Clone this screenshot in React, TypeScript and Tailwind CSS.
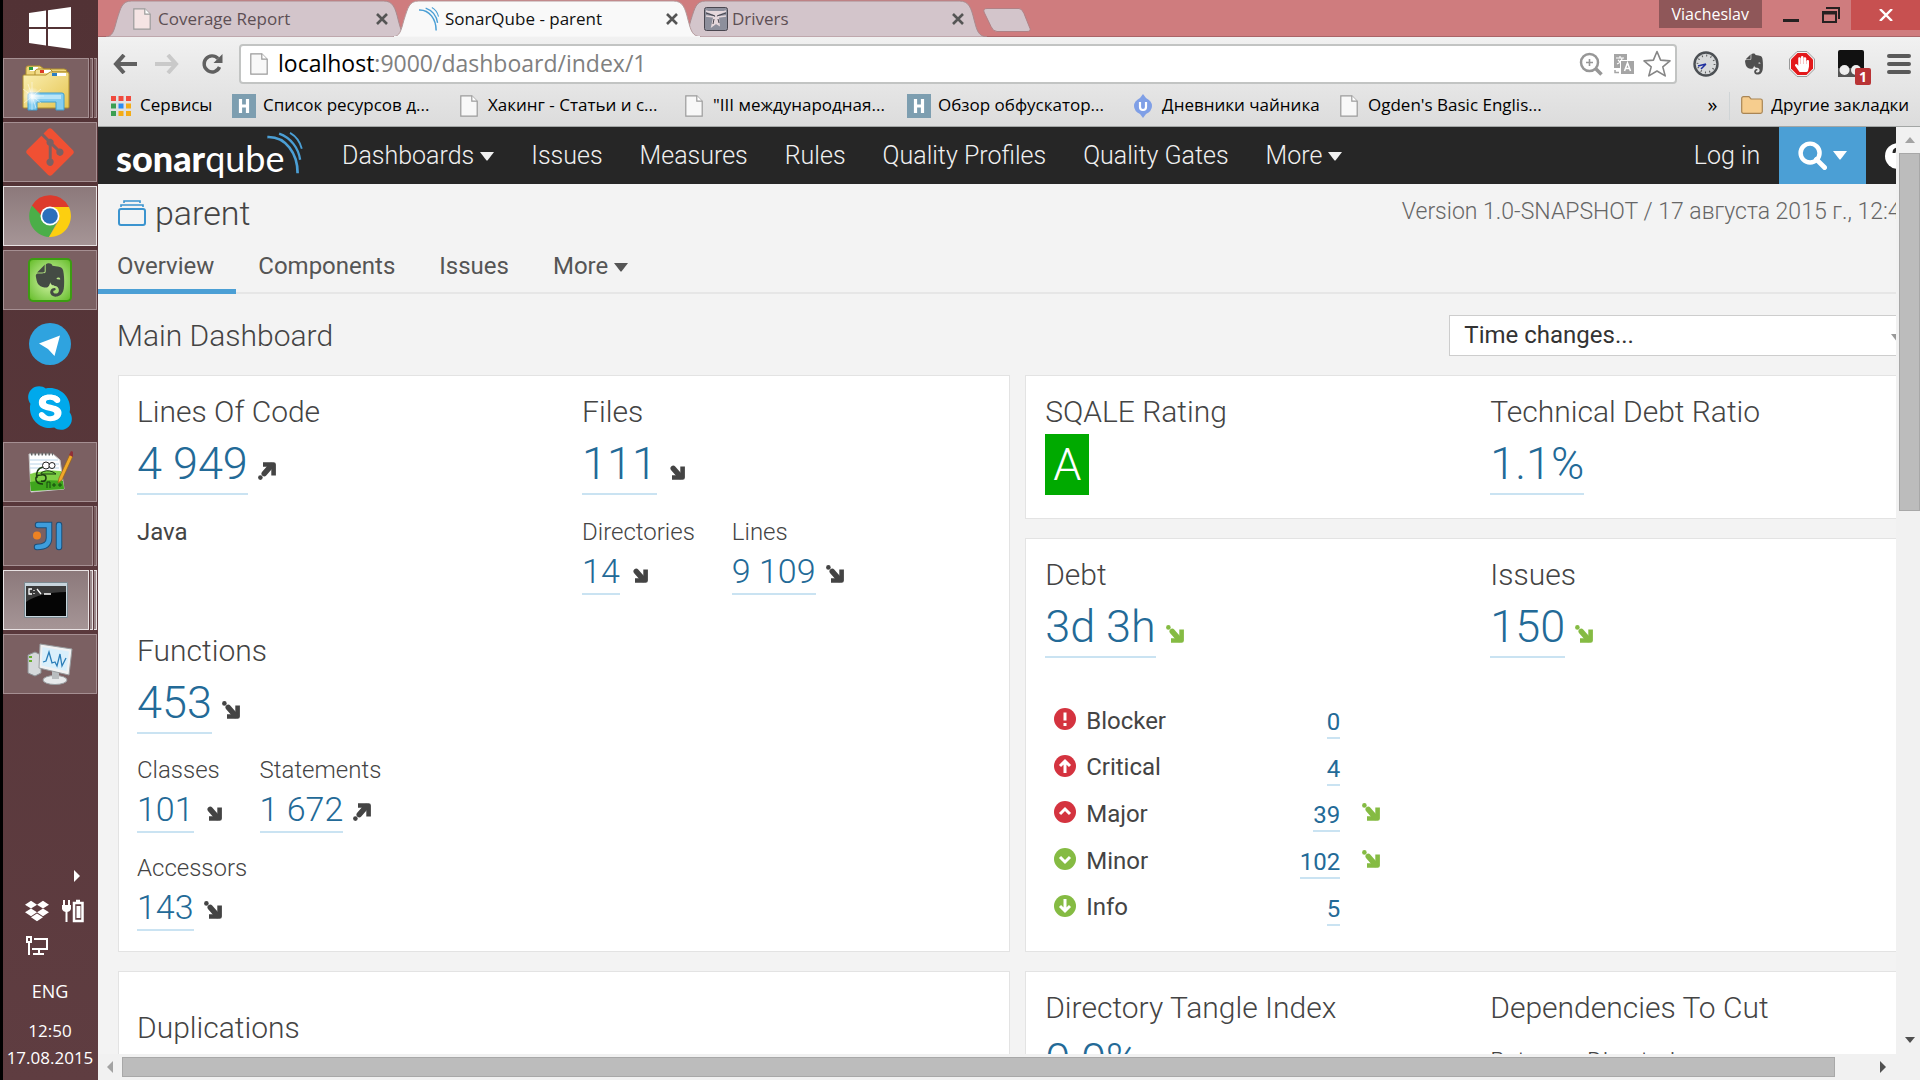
import type { ReactNode } from "react";
import { FaDropbox, FaEvernote, FaGitAlt, FaHandPaper, FaSkype } from "react-icons/fa";

const uiFont = "font-['Open_Sans','Noto_Sans',sans-serif]";

/* ---------- shared drawings ---------- */

function Caret({ className = "" }: { className?: string }) {
  return (
    <svg viewBox="0 0 14 9" className={`h-[9px] w-[14px] ${className}`} aria-hidden="true">
      <path d="M0 0h14L7.500 8.500h-1z" fill="currentColor" />
    </svg>
  );
}

function PageIcon({ tint = "#f8f8f8" }: { tint?: string }) {
  return (
    <svg viewBox="0 0 18 22" className="h-[22px] w-[18px] shrink-0" aria-hidden="true">
      <path d="M.8 .8h11l5.400 5.400v15H.8z" fill={tint} stroke="#9b9b9b" strokeWidth="1.200" />
      <path d="M11.800 .8v5.400h5.400" fill="#fff" stroke="#9b9b9b" strokeWidth="1.200" />
    </svg>
  );
}

function Waves({ className }: { className: string }) {
  return (
    <svg viewBox="0 0 42 50" className={className} fill="none" stroke="#4b9fd5" aria-hidden="true">
      <path d="M0 6C22 5 36 26 36 49" strokeWidth="3.200" />
      <path d="M14 2c14 5 23 17 25 31" strokeWidth="2.800" />
      <path d="M27 1c7 4 12 11 14 19" strokeWidth="2.200" />
    </svg>
  );
}

function Trend({ up = false, dot = true, green = false }: { up?: boolean; dot?: boolean; green?: boolean }) {
  return (
    <svg
      viewBox="0 0 18 18"
      className={`block h-[18px] w-[18px] shrink-0 ${up ? "-scale-y-100" : ""} ${green ? "text-[#85bb43]" : "text-[#444]"}`}
      aria-hidden="true"
    >
      <path d="M15.600 4.500v11H5" fill="none" stroke="currentColor" strokeWidth="4.600" strokeLinejoin="round" />
      <path d="M6.200 6.400l7 8" stroke="currentColor" strokeWidth="5.400" strokeLinecap="round" />
      {dot && <circle cx="2.400" cy="2.400" r="2.300" fill="currentColor" />}
    </svg>
  );
}

/* ---------- desktop taskbar ---------- */

function TaskButton({
  label,
  stack = 1,
  active = false,
  flat = false,
  children,
}: {
  label: string;
  stack?: number;
  active?: boolean;
  flat?: boolean;
  children: ReactNode;
}) {
  const face = flat
    ? "border-transparent"
    : active
      ? "border-[#e8e2e3] bg-linear-to-b from-[#8c797b] to-[#a59596]"
      : "border-[#a58f92] bg-[#7b6062]";
  const edge = flat ? "" : active ? "border-[#e8e2e3] bg-[#9b8a8c]" : "border-[#a58f92] bg-[#7b6062]";
  return (
    <button aria-label={label} className="flex h-[60px] w-full gap-px">
      <span className={`flex h-full min-w-0 flex-1 items-center justify-center border ${face}`}>{children}</span>
      {stack > 1 && <span className={`h-full w-[3px] border border-l-0 ${edge}`} />}
      {stack > 2 && <span className={`h-full w-[3px] border border-l-0 ${edge}`} />}
    </button>
  );
}

function Taskbar() {
  return (
    <aside
      className={`flex w-[98px] shrink-0 flex-col border-l-[3px] border-black bg-linear-to-b from-[#523235] to-[#5f3d41] pr-px text-white ${uiFont}`}
    >
      <button aria-label="Start" className="flex h-[58px] items-center justify-center pb-[2px]">
        <svg viewBox="0 0 42 42" className="h-[42px] w-[42px]" fill="#fff" aria-hidden="true">
          <path d="M0 6l17-2.500v16.500H0zM19 3.200L42 0v20H19zM0 22h17v16.500L0 36zM19 22h23v20l-23-3.200z" />
        </svg>
      </button>
      <div className="flex flex-col gap-1">
        <TaskButton label="File Explorer" stack={3}>
          <svg viewBox="0 0 48 46" className="h-[46px] w-[48px]" aria-hidden="true">
            <defs>
              <linearGradient id="fold" x1="0" y1="0" x2="1" y2="1">
                <stop offset="0" stopColor="#fbf0b4" />
                <stop offset="1" stopColor="#e5c450" />
              </linearGradient>
              <radialGradient id="flare">
                <stop offset="0" stopColor="#fff" />
                <stop offset="1" stopColor="#fff" stopOpacity="0" />
              </radialGradient>
            </defs>
            <path d="M4 3q0-2 2-2h12l4 3h20q3 0 3 3v10H4z" fill="#efd67c" stroke="#b08f2c" />
            <path d="M8 2h8v4H8z" fill="#fff" />
            <path d="M7 2h4v3H7z" fill="#2b9a3e" />
            <path d="M13 6q1-2 3-2h12l3 3h14v8H13z" fill="#f2dd8c" stroke="#b08f2c" />
            <path d="M22 5h7v3h-7z" fill="#fff" />
            <path d="M18 5h4v3h-4z" fill="#dc3b26" />
            <path d="M1 11q0-1 1-1h22l4-3h17q2 0 2 2v33q0 1-1 1H2q-1 0-1-1z" fill="url(#fold)" stroke="#b08f2c" />
            <path d="M34 8h10v3H34z" fill="#fff" />
            <path d="M30 8h5v3h-5z" fill="#2c7fc4" />
            <path d="M6 30q0-2 2-2h32q2 0 2 2v15h-8v-8H15v8H6z" fill="#84cdf0" stroke="#3e9ed0" />
            <path d="M9 30h30v4H9z" fill="#b9e5f8" />
            <circle cx="10" cy="31" r="9" fill="url(#flare)" />
            <path d="M10 17v28M1 24l18 14M2 38l17-14M10 31h12M6 19l8 24" stroke="#fff" strokeWidth=".8" opacity=".6" />
          </svg>
        </TaskButton>
        <TaskButton label="Git">
          <FaGitAlt className="h-[54px] w-[54px] text-[#f05033]" aria-hidden="true" />
        </TaskButton>
        <TaskButton label="Chrome" active>
          <svg viewBox="0 0 42 42" className="h-[42px] w-[42px]" aria-hidden="true">
            <path d="M21 21L3 10.500A21 21 0 0 0 20 42l9-17z" fill="#4bae48" />
            <path d="M21 12h18.900A21 21 0 0 1 20 42l10-17z" fill="#fccf10" />
            <path d="M3 10.500A21 21 0 0 1 39.900 12H21l-9 8z" fill="#dd3a2c" />
            <circle cx="21" cy="21" r="9.500" fill="#fff" />
            <circle cx="21" cy="21" r="7.800" fill="#2a6fbb" />
          </svg>
        </TaskButton>
        <TaskButton label="Evernote">
          <span className="flex h-[44px] w-[44px] items-center justify-center rounded-[5px] border-2 border-[#3c9c12] bg-radial from-[#d8f7a8] to-[#65bd24]">
            <FaEvernote className="h-[38px] w-[38px] text-[#444b44]" aria-hidden="true" />
          </span>
        </TaskButton>
        <TaskButton label="Telegram" flat>
          <svg viewBox="0 0 42 42" className="h-[42px] w-[42px]" aria-hidden="true">
            <circle cx="21" cy="21" r="21" fill="#2fa3df" />
            <path d="M10 20.500L31 12.500 25.500 33 19 26z" fill="#fff" />
          </svg>
        </TaskButton>
        <TaskButton label="Skype" flat>
          <span className="flex h-[44px] w-[44px] items-center justify-center bg-[radial-gradient(circle,white_45%,transparent_46%)]">
            <FaSkype className="h-[50px] w-[50px] shrink-0 text-[#00a9ec]" aria-hidden="true" />
          </span>
        </TaskButton>
        <TaskButton label="Notepad++">
          <svg viewBox="0 0 46 44" className="h-[44px] w-[46px]" aria-hidden="true">
            <path d="M2 4h24l7 6 4 29-33 3z" fill="#fff" stroke="#c6c6c6" />
            <path d="M3 10h28M3 14h29M3 18h29" stroke="#b8d3e8" />
            <path d="M3 24q16-5 31-3l3 18-33 2z" fill="#7fcf45" />
            <path d="M3 32q16-3 33-1l1 8-33 2z" fill="#3fa51d" />
            <path d="M4 4h22" stroke="#666" strokeWidth="3" strokeDasharray="1.500 2" />
            <path d="M14 23q5-4 12-1l3 2H14z" fill="#6cc93a" stroke="#1d3d12" />
            <path d="M10 28q-2-9 6-11M14 31q5 1 5-3t-5-3q-6 0-5 5 1 4 7 4" fill="none" stroke="#1d3d12" strokeWidth="1.600" />
            <circle cx="19" cy="15.500" r="3.500" fill="#fff" stroke="#222" />
            <circle cx="25" cy="15.500" r="3" fill="#fff" stroke="#222" />
            <path d="M20 38v-6h3v6M25 35h4M27 33v4M31 35h4M33 33v4" stroke="#17480e" fill="none" />
            <path d="M31 33l1-5L43 4l3 2-11 24z" fill="#f1a92a" stroke="#94611c" strokeWidth=".7" />
            <path d="M42 5l2-4 3 1-1 5z" fill="#8f3038" />
          </svg>
        </TaskButton>
        <TaskButton label="IntelliJ IDEA" stack={2}>
          <svg viewBox="0 0 30 30" className="h-[30px] w-[30px]" fill="none" strokeLinecap="round" aria-hidden="true">
            <path d="M5 4h11v13q0 9-12 9M26 4v22" stroke="#1c4f7a" strokeWidth="6.500" />
            <path d="M5 4h11v13q0 9-12 9M26 4v22" stroke="#3e9ddc" strokeWidth="4.500" />
            <circle cx="4" cy="14.500" r="4" fill="#ee8222" />
          </svg>
        </TaskButton>
        <TaskButton label="Command Prompt" active stack={3}>
          <svg viewBox="0 0 44 36" className="h-[36px] w-[44px]" aria-hidden="true">
            <path d="M.5 .5h43v35H.5z" fill="#c7d4dc" stroke="#7c8990" />
            <path d="M2 4h40v30H2z" fill="#050505" />
            <path d="M2 4h40v6Q16 10 2 20z" fill="#3a3a3a" />
            <path d="M8 7H5v5h3M10 8v1M10 11v1M13 7l4 5M20 12h7" stroke="#fff" strokeWidth="1.300" fill="none" />
          </svg>
        </TaskButton>
        <TaskButton label="Resource Monitor">
          <svg viewBox="0 0 46 42" className="h-[42px] w-[46px]" aria-hidden="true">
            <path d="M1 12l7-3 6 3v18l-6 3-7-3z" fill="#d5d8da" stroke="#8d9194" />
            <path d="M2 14h3M2 18h3" stroke="#68ad2e" strokeWidth="2" />
            <ellipse cx="28" cy="37" rx="12" ry="4.500" fill="#e7e9eb" stroke="#989c9f" />
            <path d="M25 27h7v9h-7z" fill="#b9bdc0" />
            <path d="M13 1l32 5-3 26-30-7z" fill="#f0f1f2" stroke="#989c9f" />
            <path d="M15.500 4L42 8.500 39.500 28l-25-5.500z" fill="#d9effb" />
            <path d="M16 19l3-1 3-9 3 11 3-1 2 4 3-12 2 12 4-8" fill="none" stroke="#2a7db8" strokeWidth="1.300" />
          </svg>
        </TaskButton>
      </div>
      <div className="mt-auto flex flex-col">
        <svg viewBox="0 0 6 12" className="mr-[17px] h-[12px] w-[6px] self-end" fill="#fff" aria-hidden="true">
          <path d="M0 0l6 6-6 6z" />
        </svg>
        <div className="mt-[17px] flex gap-[13px] pl-[22px]">
          <FaDropbox className="h-[24px] w-[24px] text-white" aria-label="Dropbox" />
          <svg viewBox="0 0 22 24" className="h-[24px] w-[22px]" fill="none" stroke="#fff" aria-label="Battery">
            <path d="M2 1v5M7 1v5M4.500 12v11" strokeWidth="2" />
            <path d="M0 6h9v4q-1 3-4.500 3T0 10z" fill="#fff" stroke="none" />
            <path d="M12 4h8.500v18H12zM14 2h4" strokeWidth="2.500" />
            <path d="M14.500 7h4v12h-4z" fill="#fff" stroke="none" />
          </svg>
        </div>
        <svg viewBox="0 0 22 20" className="ml-[23px] mt-[13px] h-[20px] w-[22px]" fill="none" stroke="#fff" strokeWidth="2" aria-label="Network">
          <path d="M1 1h4v5H1zM3 6v13M8 3h13v10H6M13 13v5M7 18h11" />
        </svg>
        <span className="mt-[21px] text-center text-[18px] leading-[28px]">ENG</span>
        <span className="mt-[12px] text-center text-[17px] leading-[27px]">12:50</span>
        <span className="mb-[9px] whitespace-nowrap text-center text-[17px] leading-[27px]">17.08.2015</span>
      </div>
    </aside>
  );
}

/* ---------- browser window ---------- */

function BrowserTab({
  title,
  icon,
  active = false,
  className = "",
}: {
  title: string;
  icon: ReactNode;
  active?: boolean;
  className?: string;
}) {
  return (
    <div className={`relative flex h-[37px] items-center pl-[24px] pr-[23px] ${active ? "z-10" : ""} ${className}`}>
      <svg viewBox="0 0 310 37" preserveAspectRatio="none" className="absolute inset-0 h-full w-full" aria-hidden="true">
        <path
          d="M0 37C7 36 8 31 11 20 15 8 16 1 26 1H282c10 0 12 7 15 19 3 11 4 16 13 17z"
          fill={active ? "#f9f9f9" : "#d3c5cb"}
          stroke={active ? "#b49a9c" : "#a98a8e"}
          strokeWidth="1"
        />
        {active && <path d="M1 36h308v1H1z" fill="#f6f6f6" />}
      </svg>
      <span className="relative flex w-[24px] justify-center">{icon}</span>
      <button className={`relative ml-[4px] text-left text-[17px] leading-[26px] ${active ? "text-[#111]" : "text-[#5d4f54]"}`}>{title}</button>
      <button aria-label={`Close ${title}`} className="relative ml-auto">
        <svg viewBox="0 0 12 12" className="h-[12px] w-[12px]" stroke="#555" strokeWidth="2.600" aria-hidden="true">
          <path d="M1 1l10 10M11 1L1 11" />
        </svg>
      </button>
    </div>
  );
}

function TitleBar() {
  return (
    <div className="flex h-[37px] items-start border-b border-[#a96467] bg-[#cf7c7e] pl-[8px]">
      <BrowserTab title="Coverage Report" className="w-[305px]" icon={<PageIcon tint="#f5e4e4" />} />
      <BrowserTab title="SonarQube - parent" active className="-ml-[18px] w-[308px]" icon={<Waves className="h-[24px] w-[20px]" />} />
      <BrowserTab
        title="Drivers"
        className="-ml-[21px] w-[307px]"
        icon={
          <svg viewBox="0 0 24 24" className="h-[24px] w-[24px]" aria-hidden="true">
            <rect x=".5" y=".5" width="23" height="23" rx="2" fill="#8d8f9c" stroke="#4a4750" />
            <path d="M2 4l8 3 2 2 2-2 8-3M2 9l8 1M22 9l-8 1M10 10l-2 9 4-3 3 2-1-9" fill="#e6d8dc" stroke="#e6d8dc" strokeWidth="1.600" />
            <path d="M2 6l9 3M22 6l-9 3M10 12l-1 5M14 12l1 4" stroke="#4a4750" strokeWidth="1" />
          </svg>
        }
      />
      <button aria-label="New tab" className="-ml-[4px] mt-[8px]">
        <svg viewBox="0 0 48 24" className="block h-[24px] w-[48px]" aria-hidden="true">
          <path d="M4 .5h32q3 0 5 5l6 15q1 3-3 3H14q-4 0-6-5L1 4Q0 .5 4 .5z" fill="#d3c5cb" stroke="#b08185" />
        </svg>
      </button>
      <div className="ml-auto flex items-start">
        <button className="h-[28px] bg-[#8f5759] px-[13px] text-[16px] leading-[26px] text-white">Viacheslav</button>
        <button aria-label="Minimize" className="ml-[21px] mt-[19px] h-[3px] w-[16px] bg-[#262020]" />
        <button aria-label="Restore" className="ml-[23px] mt-[7px]">
          <svg viewBox="0 0 18 16" className="h-[16px] w-[18px]" fill="none" stroke="#262020" strokeWidth="2" aria-hidden="true">
            <path d="M1 5h13v10H1zM4 1h13v11" />
            <path d="M1 6h13" strokeWidth="3" />
          </svg>
        </button>
        <button aria-label="Close" className="ml-[11px] flex h-[30px] w-[69px] items-center justify-center bg-[#c75050]">
          <svg viewBox="0 0 14 12" className="h-[12px] w-[14px]" stroke="#fff" strokeWidth="2.400" aria-hidden="true">
            <path d="M1 0l12 12M13 0L1 12" />
          </svg>
        </button>
      </div>
    </div>
  );
}

function AddressRow() {
  return (
    <div className="flex h-[53px] items-center pl-[15px] pr-[9px]">
      <button aria-label="Back">
        <svg viewBox="0 0 24 20" className="h-[20px] w-[24px]" fill="none" stroke="#606060" strokeWidth="4" aria-hidden="true">
          <path d="M11 1L3 10l8 9M3 10h21" />
        </svg>
      </button>
      <button aria-label="Forward" className="ml-[18px]">
        <svg viewBox="0 0 24 20" className="h-[20px] w-[24px]" fill="none" stroke="#c9c9c9" strokeWidth="4" aria-hidden="true">
          <path d="M13 1l8 9-8 9M21 10H0" />
        </svg>
      </button>
      <button aria-label="Reload" className="ml-[22px]">
        <svg viewBox="0 0 22 22" className="h-[22px] w-[22px]" aria-hidden="true">
          <path d="M17 5.500A8 8 0 1 0 18.500 14" fill="none" stroke="#606060" strokeWidth="3.400" />
          <path d="M21.500 1v9h-9z" fill="#606060" />
        </svg>
      </button>
      <div className="ml-[16px] flex h-[40px] min-w-0 flex-1 items-center rounded-[4px] border-2 border-[#c2c4c3] bg-white pl-[9px] pr-[4px]">
        <PageIcon />
        <div className="relative ml-[10px] h-[34px] flex-1 text-[23px] leading-[32px]">
          <input
            aria-label="Address"
            defaultValue="localhost:9000/dashboard/index/1"
            className="h-full w-full bg-transparent text-transparent outline-none"
          />
          <span className="pointer-events-none absolute inset-0 whitespace-nowrap text-[#808080]" aria-hidden="true">
            <span className="text-black">localhost</span>:9000/dashboard/index/1
          </span>
        </div>
        <button aria-label="Zoom">
          <svg viewBox="0 0 24 24" className="h-[24px] w-[24px]" fill="none" stroke="#979797" strokeWidth="2.500" aria-hidden="true">
            <circle cx="10.500" cy="10.500" r="8.500" />
            <path d="M16.500 16.500l6 6" strokeWidth="3.500" />
            <path d="M10.500 7v7M7 10.500h7" strokeWidth="1.600" />
          </svg>
        </button>
        <button aria-label="Translate" className="ml-[11px]">
          <svg viewBox="0 0 20 20" className="h-[20px] w-[20px]" aria-hidden="true">
            <path d="M0 0h13v6H6v8H0z" fill="#a5a5a5" />
            <path d="M2 4h8M6 2v2M3 10q5-2 5-6M4 6l3 3" stroke="#fff" strokeWidth="1.200" fill="none" />
            <path d="M7 7h13v13H7z" fill="#a5a5a5" />
            <path d="M10.500 17l3-8 3 8M11.500 14.500h4" stroke="#fff" strokeWidth="1.500" fill="none" />
            <path d="M1 16v2.500h4" stroke="#a5a5a5" strokeWidth="1.500" fill="none" />
          </svg>
        </button>
        <button aria-label="Bookmark this page" className="ml-[9px]">
          <svg viewBox="0 0 28 27" className="h-[27px] w-[28px]" fill="#fff" stroke="#868686" strokeWidth="1.600" strokeLinejoin="round" aria-hidden="true">
            <path d="M14 1.500l3.600 8.600 9.400.8-7.200 6 2.400 9L14 21l-8.200 4.900 2.400-9L1 10.900l9.400-.8z" />
          </svg>
        </button>
      </div>
      <button aria-label="Clock extension" className="ml-[16px]">
        <svg viewBox="0 0 26 26" className="h-[26px] w-[26px]" aria-hidden="true">
          <circle cx="13" cy="13" r="11.500" fill="#d8dadb" stroke="#4c5054" strokeWidth="2.400" />
          <circle cx="13" cy="13" r="8.500" fill="none" stroke="#555" strokeWidth="1.800" strokeDasharray="1 3.450" />
          <path d="M13 13l-8 2M13 13l-5 5" stroke="#2030a0" strokeWidth="1.500" />
        </svg>
      </button>
      <button aria-label="Evernote clipper" className="ml-[23px]">
        <FaEvernote className="h-[24px] w-[24px] text-[#505050]" aria-hidden="true" />
      </button>
      <button aria-label="Adblock" className="relative ml-[23px] flex h-[26px] w-[26px] items-center justify-center">
        <svg viewBox="0 0 26 26" className="absolute inset-0 h-[26px] w-[26px]" aria-hidden="true">
          <path d="M8 .5h10L25.500 8v10L18 25.500H8L.5 18V8z" fill="#f4f4f4" stroke="#999" />
          <path d="M8.500 2h9L24 8.500v9L17.500 24h-9L2 17.500v-9z" fill="#e3191b" />
        </svg>
        <FaHandPaper className="relative h-[16px] w-[16px] text-white" aria-hidden="true" />
      </button>
      <button aria-label="Tampermonkey, 1 script" className="relative ml-[23px]">
        <svg viewBox="0 0 26 28" className="h-[28px] w-[26px]" aria-hidden="true">
          <rect width="26" height="27" rx="2" fill="#111" />
          <path d="M0 18h26v9H0z" fill="#555" />
          <circle cx="6.500" cy="20" r="5" fill="#eee" />
          <circle cx="18" cy="20" r="5" fill="#eee" />
        </svg>
        <span className="absolute -bottom-[7px] -right-[7px] h-[17px] w-[16px] rounded-[2px] bg-[#b93436] text-center text-[14px] font-bold leading-[17px] text-white">
          1
        </span>
      </button>
      <button aria-label="Chrome menu" className="ml-[23px]">
        <svg viewBox="0 0 24 20" className="h-[20px] w-[24px]" stroke="#5a5a5a" strokeWidth="4" strokeLinecap="round" aria-hidden="true">
          <path d="M2 2h20M2 10h20M2 18h20" />
        </svg>
      </button>
    </div>
  );
}

function HabrIcon() {
  return (
    <svg viewBox="0 0 24 24" className="h-[24px] w-[24px] shrink-0" aria-hidden="true">
      <path d="M0 0h24v24H0z" fill="#7d9eb0" />
      <path d="M8.500 5v14M15.500 5v14M8 12h8" stroke="#fff" strokeWidth="3.200" />
    </svg>
  );
}

function Bookmark({ icon, width, children }: { icon: ReactNode; width: string; children: ReactNode }) {
  return (
    <a href="#" className={`flex shrink-0 items-center whitespace-nowrap ${width}`}>
      <span className="flex w-[24px] justify-center">{icon}</span>
      <span className="ml-[7px] pb-[2px]">{children}</span>
    </a>
  );
}

function BookmarksBar() {
  return (
    <div className="flex h-[36px] items-center pb-[5px] pl-[11px] pr-[11px] text-[17px] leading-[26px] text-black">
      <Bookmark
        width="w-[123px]"
        icon={
          <svg viewBox="0 0 20 20" className="h-[20px] w-[20px]" aria-hidden="true">
            <path d="M0 0h5v5H0zM7.500 0h5v5h-5zM15 0h5v5h-5z" fill="#f04a3e" />
            <path d="M0 7.500h5v5H0zM0 15h5v5H0z" fill="#3c9f52" />
            <path d="M7.500 7.500h5v5h-5z" fill="#2a8bf2" />
            <path d="M15 7.500h5v5h-5zM7.500 15h5v5h-5zM15 15h5v5h-5z" fill="#f3ac17" />
          </svg>
        }
      >
        Сервисы
      </Bookmark>
      <Bookmark width="w-[225px]" icon={<HabrIcon />}>Список ресурсов д...</Bookmark>
      <Bookmark width="w-[225px]" icon={<PageIcon />}>Хакинг - Статьи и с...</Bookmark>
      <Bookmark width="w-[225px]" icon={<PageIcon />}>"III международная...</Bookmark>
      <Bookmark width="w-[224px]" icon={<HabrIcon />}>Обзор обфускатор...</Bookmark>
      <Bookmark
        width="w-[206px]"
        icon={
          <svg viewBox="0 0 20 24" className="h-[24px] w-[20px]" aria-hidden="true">
            <path d="M10 0l3 4q6 3 6 8t-6 8l-3 4-3-4q-6-3-6-8t6-8z" fill="#7f9fe6" />
            <path d="M7 8v5q0 3 3 3t3-3V8" fill="none" stroke="#fff" strokeWidth="2.200" />
          </svg>
        }
      >
        Дневники чайника
      </Bookmark>
      <Bookmark width="w-[210px]" icon={<PageIcon />}>Ogden's Basic Englis...</Bookmark>
      <button aria-label="More bookmarks" className="ml-auto pb-[2px] text-[20px] leading-[24px]">»</button>
      <span className="ml-[12px] mr-[11px] h-[28px] w-px bg-[#cfd4d6]" />
      <a href="#" className="flex items-center gap-[8px] whitespace-nowrap pb-[2px]">
        <svg viewBox="0 0 22 18" className="h-[18px] w-[22px]" aria-hidden="true">
          <path d="M.7 2.500Q.7.700 2.500.700H8l2 2.300h9.500q1.800 0 1.800 1.800v10.700q0 1.800-1.800 1.800h-17q-1.800 0-1.800-1.800z" fill="#f6cd8e" stroke="#a98554" strokeWidth="1.200" />
        </svg>
        Другие закладки
      </a>
    </div>
  );
}

/* ---------- SonarQube page ---------- */

function NavLink({ children, caret = false }: { children: ReactNode; caret?: boolean }) {
  return (
    <a href="#" className="flex items-center gap-[6px] whitespace-nowrap">
      {children}
      {caret && <Caret className="mt-[2px]" />}
    </a>
  );
}

function TopNav() {
  return (
    <nav className="flex h-[57px] items-center bg-[#262626] pl-[18px] text-[25px] font-light text-[#f0f0f0]">
      <a href="#" className="relative mr-[37px] flex h-full w-[189px] items-end pb-[6px] font-['Lato',sans-serif] text-[36px] leading-[40px] text-white">
        <span className="font-black">sonar</span>
        <span className="font-normal">qube</span>
        <Waves className="absolute -right-px top-[5px] h-[42px] w-[42px]" />
      </a>
      <div className="flex items-center gap-[37px]">
        <NavLink caret>Dashboards</NavLink>
        <NavLink>Issues</NavLink>
        <NavLink>Measures</NavLink>
        <NavLink>Rules</NavLink>
        <NavLink>Quality Profiles</NavLink>
        <NavLink>Quality Gates</NavLink>
        <NavLink caret>More</NavLink>
      </div>
      <div className="ml-auto flex h-full items-center">
        <NavLink>Log in</NavLink>
        <button aria-label="Search" className="ml-[19px] flex h-full w-[87px] items-center justify-center gap-[6px] bg-[#4b9fd5] text-white">
          <svg viewBox="0 0 30 30" className="h-[29px] w-[29px]" fill="none" stroke="#fff" aria-hidden="true">
            <circle cx="12.500" cy="12.500" r="9.800" strokeWidth="4.600" />
            <path d="M19 19l8.500 8.500" strokeWidth="5" strokeLinecap="round" />
          </svg>
          <Caret />
        </button>
        <button aria-label="Help" className="ml-[19px] mr-[26px]">
          <svg viewBox="0 0 26 26" className="h-[26px] w-[26px]" aria-hidden="true">
            <circle cx="13" cy="13" r="13" fill="#fff" />
            <path d="M9 10q0-4 4-4t4 4q0 2-4 4v2M13 18v3" stroke="#262626" strokeWidth="3" fill="none" />
          </svg>
        </button>
      </div>
    </nav>
  );
}

function Title({ children }: { children: ReactNode }) {
  return <h3 className="whitespace-nowrap text-[30px] font-light leading-[40px] text-[#444]">{children}</h3>;
}

function Big({ children, trend }: { children: ReactNode; trend?: ReactNode }) {
  return (
    <div className="mt-[3px] flex items-end gap-[10px]">
      <a href="#" className="border-b-2 border-[#cae3f2] text-[45px] font-light leading-[58px] whitespace-nowrap text-[#236a97]">
        {children}
      </a>
      {trend && <span className="mb-[15px]">{trend}</span>}
    </div>
  );
}

function Small({ label, value, trend }: { label: string; value: string; trend: ReactNode }) {
  return (
    <div>
      <div className="whitespace-nowrap text-[24px] font-light leading-[30px] text-[#444]">{label}</div>
      <div className="mt-[2px] flex items-end gap-[10px]">
        <a href="#" className="whitespace-nowrap border-b-2 border-[#cae3f2] text-[34px] font-light leading-[44px] text-[#236a97]">
          {value}
        </a>
        <span className="mb-[12px]">{trend}</span>
      </div>
    </div>
  );
}

function Card({ children, className = "" }: { children: ReactNode; className?: string }) {
  return <section className={`grid grid-cols-2 border border-[#e3e3e3] bg-white ${className}`}>{children}</section>;
}

function Severity({ kind }: { kind: string }) {
  const paths: Record<string, string> = {
    Blocker: "M11 4.500v8M11 15v3",
    Critical: "M11 18V6M6 11l5-5 5 5",
    Major: "M6 13l5-5 5 5",
    Minor: "M6 9l5 5 5-5",
    Info: "M11 4v12M6 11l5 5 5-5",
  };
  const good = kind === "Minor" || kind === "Info";
  return (
    <svg viewBox="0 0 22 22" className="h-[22px] w-[22px]" aria-hidden="true">
      <circle cx="11" cy="11" r="11" fill={good ? "#85bb43" : "#d4333f"} />
      <path d={paths[kind]} fill="none" stroke="#fff" strokeWidth="3" />
    </svg>
  );
}

const severities = [
  { name: "Blocker", value: "0", trend: false },
  { name: "Critical", value: "4", trend: false },
  { name: "Major", value: "39", trend: true },
  { name: "Minor", value: "102", trend: true },
  { name: "Info", value: "5", trend: false },
];

function Dashboard() {
  return (
    <div className="grid grid-cols-2 items-start gap-[15px] px-[20px]">
      <div className="flex flex-col gap-[19px]">
        <Card className="pb-[20px] pt-[16px]">
          <div className="pl-[18px]">
            <Title>Lines Of Code</Title>
            <Big trend={<Trend up />}>4 949</Big>
            <div className="mt-[22px] text-[24px] leading-[30px]">Java</div>
          </div>
          <div className="pl-[18px]">
            <Title>Files</Title>
            <Big trend={<Trend dot={false} />}>111</Big>
            <div className="mt-[22px] flex gap-[37px]">
              <Small label="Directories" value="14" trend={<Trend dot={false} />} />
              <Small label="Lines" value="9 109" trend={<Trend />} />
            </div>
          </div>
          <div className="mt-[36px] pl-[18px]">
            <Title>Functions</Title>
            <Big trend={<Trend />}>453</Big>
            <div className="mt-[21px] flex gap-[38px]">
              <Small label="Classes" value="101" trend={<Trend dot={false} />} />
              <Small label="Statements" value="1 672" trend={<Trend up />} />
            </div>
            <div className="mt-[20px]">
              <Small label="Accessors" value="143" trend={<Trend />} />
            </div>
          </div>
        </Card>
        <Card className="pb-[60px] pt-[36px]">
          <div className="pl-[18px]">
            <Title>Duplications</Title>
            <Big>0.0%</Big>
          </div>
        </Card>
      </div>
      <div className="flex flex-col gap-[19px]">
        <Card className="pb-[23px] pt-[16px]">
          <div className="pl-[19px]">
            <Title>SQALE Rating</Title>
            <a href="#" className="mt-[2px] inline-block bg-[#00aa00] px-[8px] text-[45px] font-light leading-[61px] text-white">
              A
            </a>
          </div>
          <div className="pl-[19px]">
            <Title>Technical Debt Ratio</Title>
            <Big>1.1%</Big>
          </div>
        </Card>
        <Card className="pb-[20px] pt-[16px]">
          <div className="pl-[19px]">
            <Title>Debt</Title>
            <Big trend={<Trend green />}>3d 3h</Big>
            <table className="ml-[9px] mt-[40px] h-[233px] text-[24px] leading-[30px]">
              <tbody>
                {severities.map((s) => (
                  <tr key={s.name}>
                    <td className="w-[32px] pb-[4px]">
                      <Severity kind={s.name} />
                    </td>
                    <th scope="row" className="w-[140px] pb-px text-left font-normal">{s.name}</th>
                    <td className="w-[114px] pt-[4px] text-right">
                      <a href="#" className="inline-block border-b-2 border-[#cae3f2] text-[#236a97]">{s.value}</a>
                    </td>
                    <td className="w-[44px] pb-[4px] pl-[22px]">{s.trend && <Trend green />}</td>
                  </tr>
                ))}
              </tbody>
            </table>
          </div>
          <div className="pl-[19px]">
            <Title>Issues</Title>
            <Big trend={<Trend green />}>150</Big>
          </div>
        </Card>
        <Card className="pb-[60px] pt-[16px]">
          <div className="pl-[19px]">
            <Title>Directory Tangle Index</Title>
            <Big>0.0%</Big>
          </div>
          <div className="pl-[19px]">
            <Title>Dependencies To Cut</Title>
            <div className="mt-[18px] text-[24px] font-light leading-[30px]">Between Directories</div>
          </div>
        </Card>
      </div>
    </div>
  );
}

function SonarPage() {
  return (
    <div className="w-[102.3%] text-[#444]">
      <TopNav />
      <header className="border-b-2 border-[#e6e6e6]">
        <div className="flex items-center justify-between pl-[20px] pt-[9px]">
          <h1 className="flex items-center gap-[9px] text-[34px] font-light leading-[40px]">
            <svg viewBox="0 0 28 26" className="h-[26px] w-[28px]" fill="none" stroke="#3b94cf" strokeWidth="2" aria-hidden="true">
              <rect x="1" y="9" width="26" height="16" rx="2" />
              <path d="M3 7V5h22v2M6 3V1h16v2" strokeWidth="1.600" />
            </svg>
            parent
          </h1>
          <span className="mr-[24px] whitespace-nowrap pb-[2px] text-[23px] font-light text-[#666]">
            Version 1.0-SNAPSHOT / 17 августа 2015 г., 12:42
          </span>
        </div>
        <nav className="flex h-[59px] text-[24px] leading-[30px] text-[#555]">
          <a href="#" className="h-[61px] border-b-[5px] border-[#4b9fd5] pl-[19px] pr-[22px] pt-[18px]">Overview</a>
          <a href="#" className="pl-[22px] pr-[22px] pt-[18px]">Components</a>
          <a href="#" className="pl-[22px] pr-[22px] pt-[18px]">Issues</a>
          <a href="#" className="flex items-start gap-[6px] pl-[22px] pt-[18px]">
            More
            <Caret className="mt-[12px]" />
          </a>
        </nav>
      </header>
      <div className="flex items-center justify-between pb-[19px] pl-[19px] pt-[21px]">
        <h2 className="text-[30px] font-light leading-[40px]">Main Dashboard</h2>
        <div className="relative mr-[20px] w-[468px]">
          <select aria-label="Time changes" className="h-[41px] w-full appearance-none border border-[#cdcdcd] bg-white pb-[2px] pl-[14px] text-[24px] text-[#333]">
            <option>Time changes...</option>
          </select>
          <Caret className="pointer-events-none absolute right-[12px] top-[19px] text-[#999]" />
        </div>
      </div>
      <Dashboard />
    </div>
  );
}

/* ---------- scrollbars ---------- */

function VerticalScrollbar() {
  return (
    <div className="flex w-[24px] shrink-0 flex-col items-center bg-[#f1f1f1] pl-[3px]" aria-hidden="true">
      <svg viewBox="0 0 10 6" className="my-[10px] h-[6px] w-[10px] shrink-0" fill="#a3a3a3">
        <path d="M0 6l5-6 5 6z" />
      </svg>
      <div className="min-h-0 w-full flex-1">
        <div className="h-[41%] w-full border border-[#a8a8a8] bg-[#bcbcbc]" />
      </div>
      <svg viewBox="0 0 10 6" className="my-[11px] h-[6px] w-[10px] shrink-0" fill="#505050">
        <path d="M0 0l5 6 5-6z" />
      </svg>
    </div>
  );
}

function HorizontalScrollbar() {
  return (
    <div className="flex h-[26px] shrink-0 items-center bg-[#f1f1f1] pr-[24px]" aria-hidden="true">
      <svg viewBox="0 0 6 12" className="mx-[9px] h-[12px] w-[6px] shrink-0" fill="#a3a3a3">
        <path d="M6 0L0 6l6 6z" />
      </svg>
      <div className="h-[20px] min-w-0 flex-1">
        <div className="h-full w-[98%] border border-[#a8a8a8] bg-[#bcbcbc]" />
      </div>
      <svg viewBox="0 0 6 12" className="mx-[10px] h-[12px] w-[6px] shrink-0" fill="#505050">
        <path d="M0 0l6 6-6 6z" />
      </svg>
    </div>
  );
}

export default function App() {
  return (
    <div className="flex h-screen w-full overflow-hidden">
      <Taskbar />
      <div className="flex min-w-0 flex-1 flex-col">
        <div className={`shrink-0 border-b border-[#a3a6a5] bg-linear-to-b from-[#fafafa] to-[#dcdcdc] ${uiFont}`}>
          <TitleBar />
          <AddressRow />
          <BookmarksBar />
        </div>
        <div className="flex min-h-0 flex-1">
          <main className="min-w-0 flex-1 overflow-hidden bg-[#f3f3f3] font-['Roboto',sans-serif]">
            <SonarPage />
          </main>
          <VerticalScrollbar />
        </div>
        <HorizontalScrollbar />
      </div>
    </div>
  );
}
